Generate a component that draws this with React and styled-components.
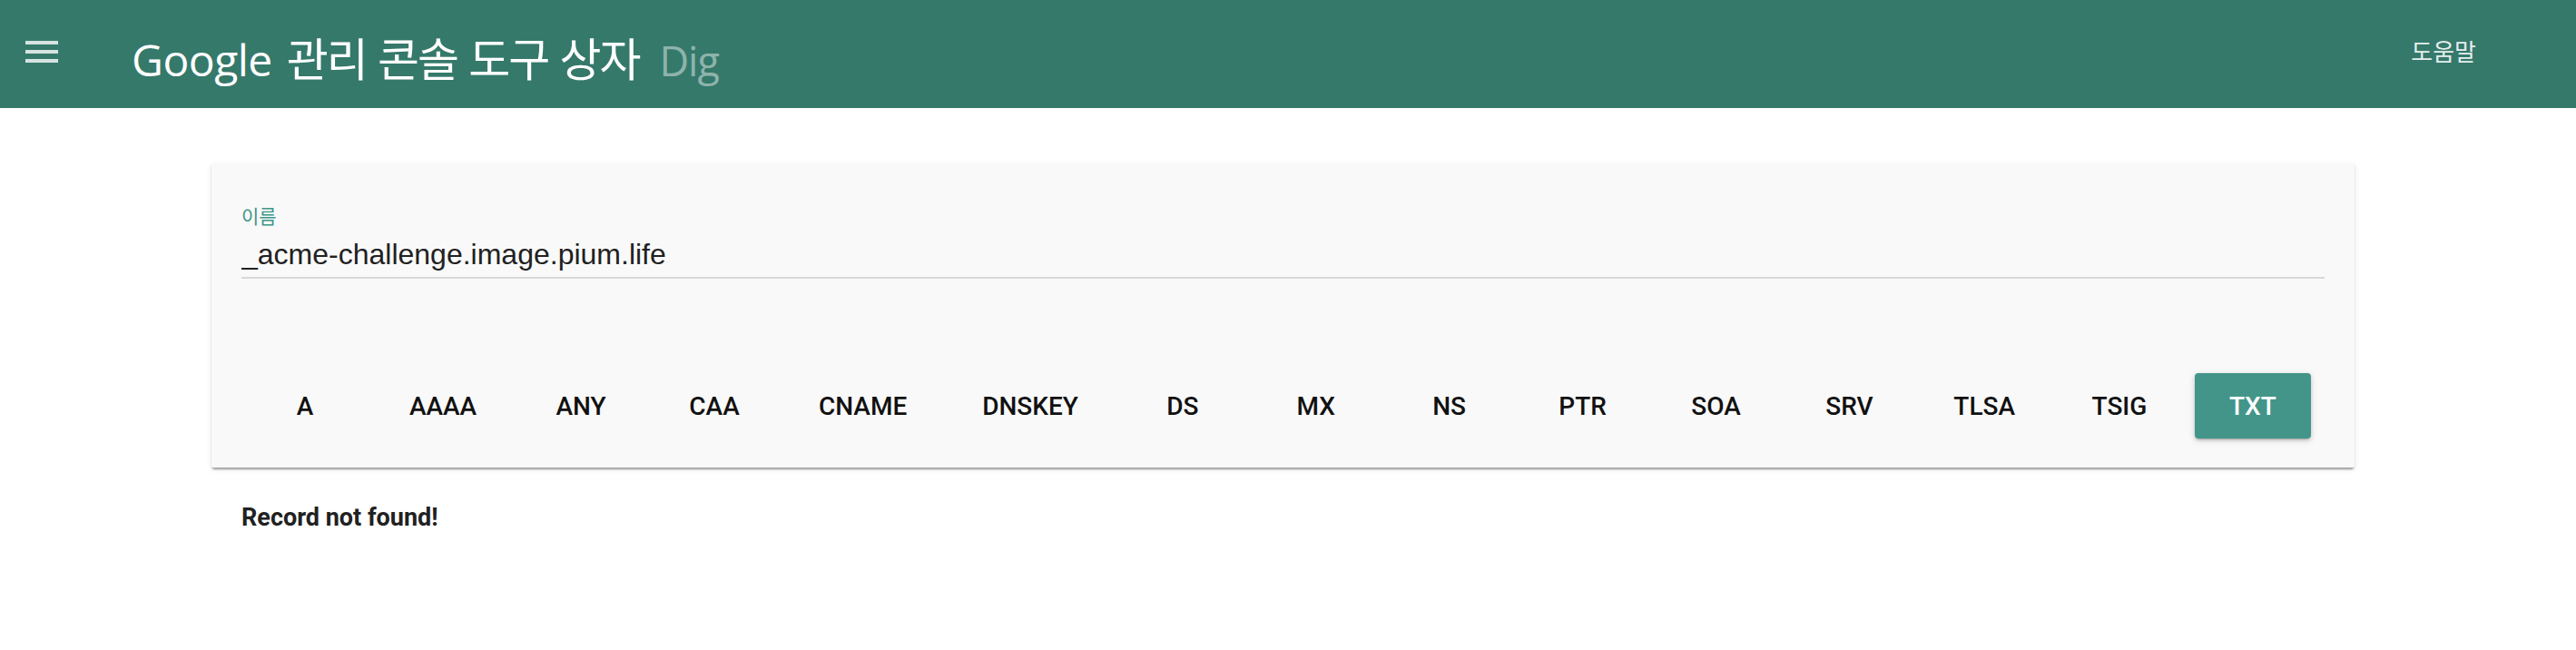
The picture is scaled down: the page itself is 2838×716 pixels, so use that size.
import React from "react";
import styled, { createGlobalStyle } from "styled-components";

const Global = createGlobalStyle`
  html, body { margin: 0; padding: 0; background: #ffffff; }
  body { font-family: Roboto, "Noto Sans CJK KR", sans-serif; }
  * { box-sizing: border-box; }
`;

const Page = styled.div`
  width: 2838px;
  min-height: 716px;
  background: #ffffff;
`;

const Header = styled.header`
  height: 119px;
  background: #35796b;
  display: flex;
  align-items: center;
  padding: 0 110px 0 28px;
`;

const MenuButton = styled.button`
  width: 36px;
  height: 24px;
  padding: 0;
  border: 0;
  background: transparent;
  display: flex;
  flex-direction: column;
  justify-content: space-between;
  margin-top: -6px;
  cursor: pointer;
`;

const MenuLine = styled.span`
  display: block;
  height: 4px;
  width: 100%;
  background: rgba(255, 255, 255, 0.8);
`;

const Title = styled.h1`
  margin: 8px 0 0 81px;
  font-family: "Open Sans", "Noto Sans CJK KR", sans-serif;
  font-weight: 400;
  font-size: 48px;
  color: #ffffff;
  display: flex;
  align-items: baseline;
  line-height: 1;
`;

const Brand = styled.span`
  letter-spacing: -0.5px;
`;

const Korean = styled.span`
  font-family: "Noto Sans CJK KR", sans-serif;
  font-size: 50px;
  letter-spacing: -2px;
  word-spacing: 3px;
  margin-left: 16px;
`;

const Sub = styled.span`
  font-size: 45px;
  color: rgba(255, 255, 255, 0.45);
  margin-left: 22px;
  letter-spacing: -1px;
`;

const Spacer = styled.div`
  flex: 1;
`;

const HelpLink = styled.a`
  font-family: "Noto Sans CJK KR", sans-serif;
  font-size: 26px;
  color: rgba(255, 255, 255, 0.9);
  text-decoration: none;
  margin-top: -8px;
`;

const Main = styled.main`
  padding: 61px 0 0 233px;
`;

const Card = styled.section`
  width: 2361px;
  background: #f9f9f9;
  border-radius: 2px;
  box-shadow: 0 4px 2px -2px rgba(0, 0, 0, 0.25), 0 2px 2px 0 rgba(0, 0, 0, 0.12),
    0 2px 6px 0 rgba(0, 0, 0, 0.1);
  padding: 45px 33px 32px;
`;

const Field = styled.label`
  display: flex;
  flex-direction: column;
  border-bottom: 2px solid #d8d8d8;
  padding-bottom: 6px;
`;

const FieldLabel = styled.span`
  font-family: "Noto Sans CJK KR", sans-serif;
  font-size: 21px;
  line-height: 24px;
  color: #3f9689;
  margin-bottom: 12px;
`;

const Input = styled.input`
  font-family: "Liberation Sans", Arial, sans-serif;
  font-size: 32px;
  line-height: 38px;
  height: 38px;
  color: #212121;
  background: transparent;
  border: 0;
  outline: none;
  padding: 0;
  margin: 0;
`;

const ButtonRow = styled.div`
  display: flex;
  justify-content: space-between;
  padding: 0 15px 0 6px;
  margin-top: 104px;
`;

const TypeButton = styled.button`
  min-width: 128px;
  height: 72px;
  padding: 0 32px;
  border: 0;
  border-radius: 4px;
  font-family: Roboto, sans-serif;
  font-weight: 500;
  font-size: 28px;
  color: ${(p) => (p.$active ? "#ffffff" : "#111111")};
  background: ${(p) => (p.$active ? "#43958a" : "transparent")};
  box-shadow: ${(p) =>
    p.$active
      ? "0 3px 2px -2px rgba(0,0,0,0.2), 0 2px 4px 0 rgba(0,0,0,0.14), 0 2px 8px 0 rgba(0,0,0,0.12)"
      : "none"};
  cursor: pointer;
`;

const Result = styled.p`
  margin: 39px 0 0 33px;
  font-family: Roboto, sans-serif;
  font-weight: 700;
  font-size: 27px;
  line-height: 32px;
  color: #212121;
`;

const TYPES = ["A", "AAAA", "ANY", "CAA", "CNAME", "DNSKEY", "DS", "MX", "NS", "PTR", "SOA", "SRV", "TLSA", "TSIG", "TXT"];

export default function App() {
  return (
    <Page>
      <Global />
      <Header>
        <MenuButton aria-label="menu">
          <MenuLine />
          <MenuLine />
          <MenuLine />
        </MenuButton>
        <Title>
          <Brand>Google</Brand>
          <Korean>관리 콘솔 도구 상자</Korean>
          <Sub>Dig</Sub>
        </Title>
        <Spacer />
        <HelpLink href="#">도움말</HelpLink>
      </Header>
      <Main>
        <Card>
          <Field>
            <FieldLabel>이름</FieldLabel>
            <Input defaultValue="_acme-challenge.image.pium.life" />
          </Field>
          <ButtonRow>
            {TYPES.map((t) => (
              <TypeButton key={t} $active={t === "TXT"}>
                {t}
              </TypeButton>
            ))}
          </ButtonRow>
        </Card>
        <Result>Record not found!</Result>
      </Main>
    </Page>
  );
}
